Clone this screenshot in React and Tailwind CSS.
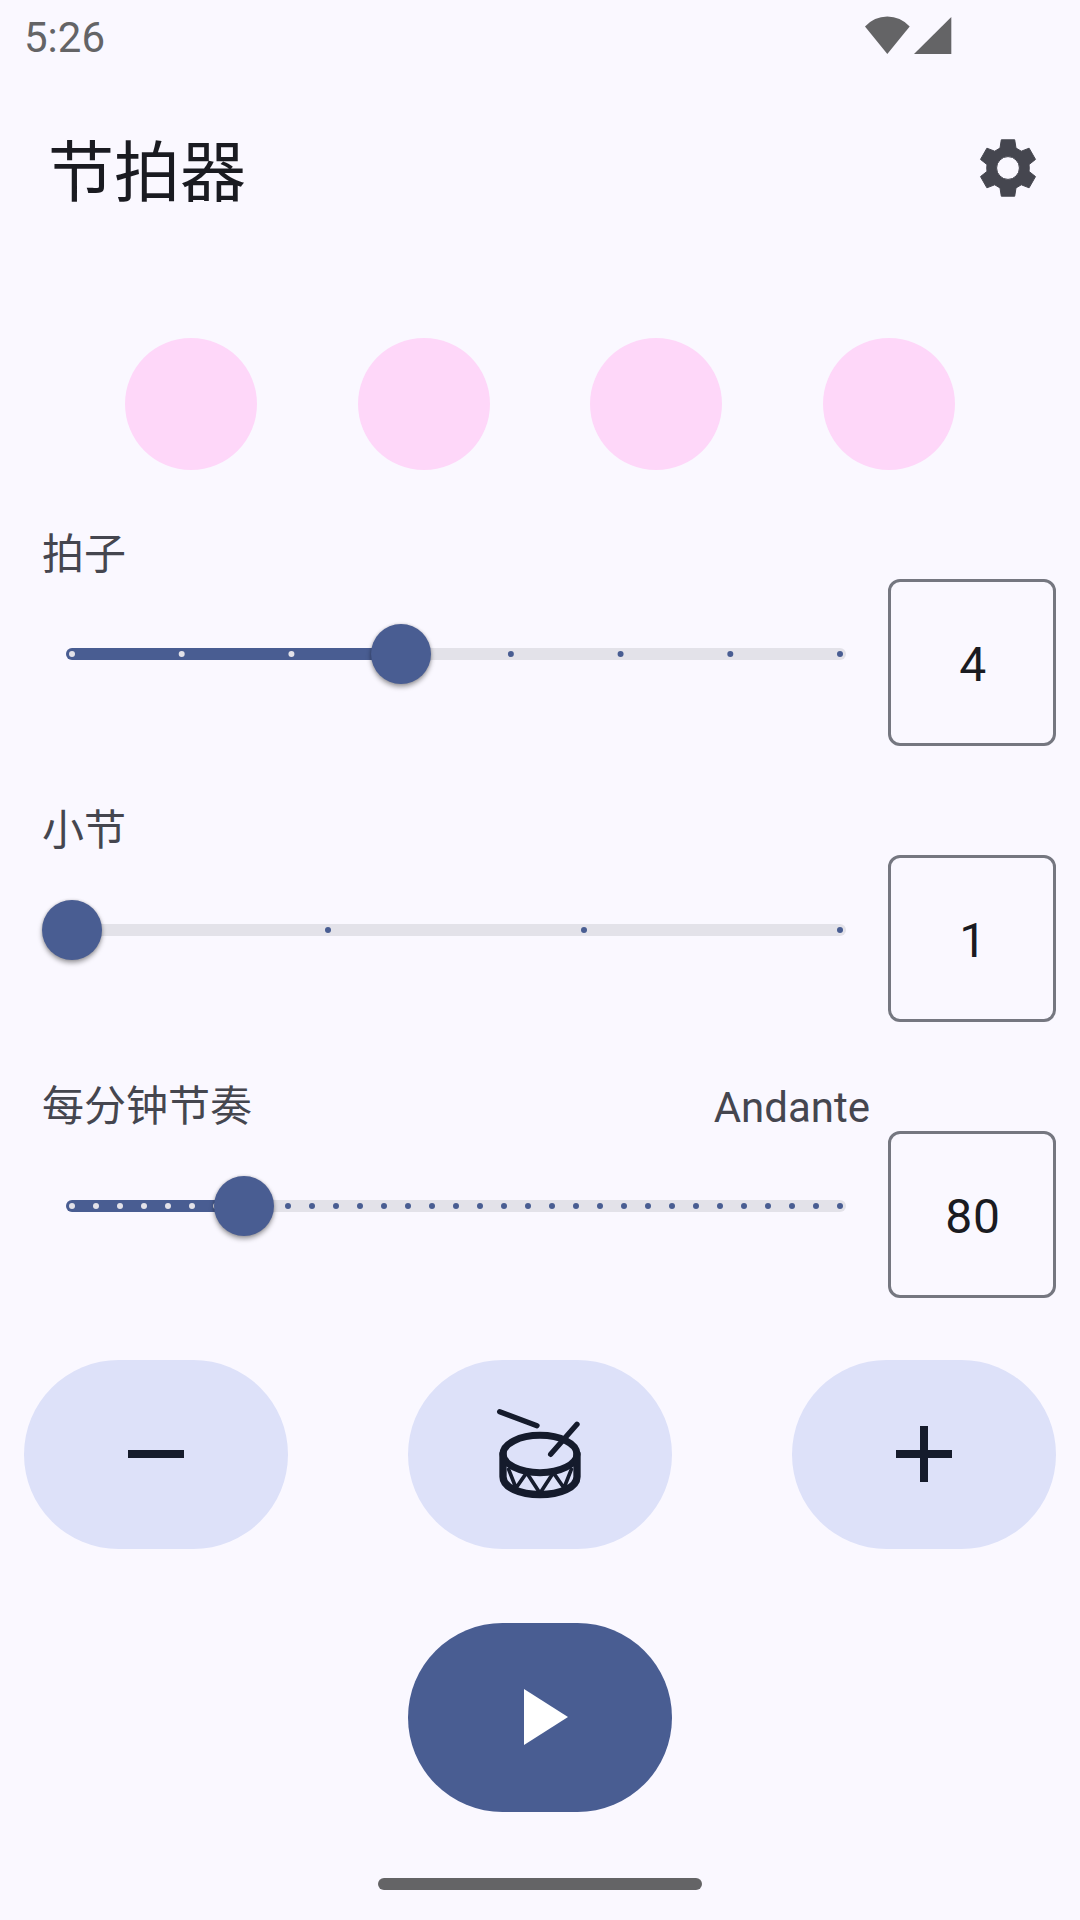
function StatusBar() {
  return (
    <div className="flex h-[72px] shrink-0 items-start justify-between pl-6 pr-[128px] text-[#646466]">
      <span className="mt-[13px] text-[42px] leading-[50px]">5:26</span>
      <div className="mt-[16px] flex gap-[4px]">
        <svg className="h-[38px] w-[46px]" viewBox="0 0 46 38" fill="currentColor">
          <path d="M1 10.6 Q10.2 0.6 23.3 0.6 T45.7 10.6 L23.3 38 Z" />
        </svg>
        <svg className="h-[38px] w-[38px]" viewBox="0 0 38 38" fill="currentColor">
          <path d="M37.3 1 V38 H0 Z" />
        </svg>
      </div>
    </div>
  );
}

function GearIcon() {
  return (
    <svg className="size-[72px]" viewBox="0 0 72 72" fill="#45464f" stroke="#45464f" strokeWidth="1" strokeLinejoin="round" fillRule="evenodd">
      <path d="M29.3 7.8H42.7L44 16.1L49.3 19.2L57.1 16.2L63.5 27.4L57 32.6Q57.5 36 57 39.4L63.5 44.6L57.1 55.8L49.3 52.8L44 55.9L42.7 64.2H29.3L28 55.9L22.7 52.8L14.9 55.8L8.5 44.6L15 39.4Q14.5 36 15 32.6L8.5 27.4L14.9 16.2L22.7 19.2L28 16.1ZM36 24.6A11.4 11.4 0 1 0 36 47.4A11.4 11.4 0 1 0 36 24.6Z" />
    </svg>
  );
}

function Slider({ ticks, value }) {
  return (
    <div className="relative ml-[24px] h-[12px] w-[780px] rounded-full bg-[#e3e2e9]">
      <div className="absolute inset-y-0 left-0 rounded-l-full bg-[#495d92]" style={{ width: `calc(6px + (100% - 12px) * ${value})` }} />
      <svg className="absolute inset-0 h-[12px] w-[780px]" viewBox="0 0 780 12">
        {Array.from({ length: ticks }, (_, i) => {
          const position = i / (ticks - 1);
          return <circle key={i} cx={6 + 768 * position} cy="6" r="3" fill={position < value ? '#e3e2e9' : '#495d92'} />;
        })}
      </svg>
      <div
        className="absolute top-[-24px] size-[60px] rounded-full bg-[#495d92] shadow-[0_3px_5px_rgba(0,0,0,0.36),0_0_3px_rgba(0,0,0,0.16)]"
        style={{ left: `calc((100% - 12px) * ${value} - 24px)` }}
      />
    </div>
  );
}

function Setting({ label, hint, ticks, value, display }) {
  return (
    <section className="flex h-[276px] shrink-0 items-start justify-between pl-[42px] pr-[24px]">
      <div className="w-[828px]">
        <div className="flex h-[123px] items-start justify-between text-[42px] leading-[60px] text-[#45464f]">
          <span>{label}</span>
          <span className="mt-[1px]">{hint}</span>
        </div>
        <Slider ticks={ticks} value={value} />
      </div>
      <div className="mt-[54px] flex h-[167px] w-[168px] justify-center rounded-[12px] border-[3px] border-[#757780] pl-[2px] pt-[55px] text-[48px] leading-[56px] tracking-[0.75px] text-[#1a1b21]">
        {display}
      </div>
    </section>
  );
}

function TonalButton({ children }) {
  return (
    <button className="flex h-[189px] w-[264px] items-start justify-center rounded-full bg-[#dde1f9] pt-[46px] text-[#151b2c]">
      <svg className="size-[96px]" viewBox="0 0 288 288" fill="none" stroke="currentColor">
        {children}
      </svg>
    </button>
  );
}

export default function App() {
  return (
    <main className="flex h-[1920px] w-[1080px] flex-col overflow-hidden bg-[#faf8ff] font-[Roboto,'Noto_Sans_CJK_SC',sans-serif]">
      <StatusBar />
      <header className="flex h-[192px] shrink-0 items-center justify-between pl-[48px] pr-[36px]">
        <h1 className="mt-[12px] text-[66px] leading-[96px] text-[#1a1b21]">节拍器</h1>
        <button aria-label="设置"><GearIcon /></button>
      </header>
      <div className="flex h-[261px] shrink-0 items-start justify-between px-[125px] pt-[74px]">
        {[0, 1, 2, 3].map((i) => (
          <span key={i} className="size-[132px] rounded-full bg-[#fed7f9]" />
        ))}
      </div>
      <Setting label="拍子" ticks={8} value={3 / 7} display="4" />
      <Setting label="小节" ticks={4} value={0} display="1" />
      <Setting label="每分钟节奏" hint="Andante" ticks={33} value={172 / 768} display="80" />
      <div className="mt-[7px] flex shrink-0 justify-between px-6">
        <TonalButton>
          <path d="M60 144H228" strokeWidth="24" />
        </TonalButton>
        <TonalButton>
          <g transform="translate(-276 -168)" strokeLinecap="round" strokeLinejoin="round">
            <path d="M299 185L411 227M531 223L452 313" strokeWidth="16" />
            <ellipse cx="420" cy="312" rx="111" ry="56" strokeWidth="21" />
            <path d="M309 312V380C309 412 360 434 420 434S531 412 531 380V312" strokeWidth="22" />
            <path d="M326 358L348 414L380 368L420 430L460 368L492 414L514 358" strokeWidth="11" />
          </g>
        </TonalButton>
        <TonalButton>
          <path d="M60 144H228M144 60V228" strokeWidth="24" />
        </TonalButton>
      </div>
      <div className="mt-[74px] flex shrink-0 justify-center">
        <button aria-label="播放" className="flex h-[189px] w-[264px] items-start rounded-full bg-[#495d92] pl-[116px] pt-[66px]">
          <svg className="h-[56px] w-[44px]" viewBox="0 0 44 56" fill="white">
            <path d="M0 0L44 28L0 56Z" />
          </svg>
        </button>
      </div>
      <div className="mx-auto mt-[66px] h-[12px] w-[324px] shrink-0 rounded-full bg-[#646466]" />
    </main>
  );
}
